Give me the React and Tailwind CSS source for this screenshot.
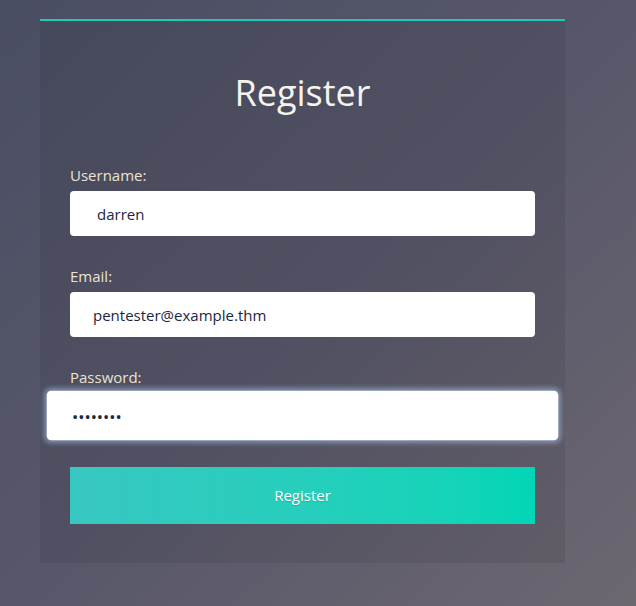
import React from 'react';

const Field = ({ label, type = 'text', value, pad = 'pl-[23px]', focused = false }) => (
    <div className="flex flex-col">
        <label className="text-[15px] leading-5 text-[#ece2d2] mb-[6px]">{label}</label>
        <input
            type={type}
            value={value}
            readOnly
            className={`h-[45px] w-full rounded-[4px] bg-white ${pad} pr-4 text-[15px] text-[#1b2640] outline-none ${
                focused ? 'scale-[1.1] shadow-[0_0_5px_2px_rgba(170,200,235,0.55)]' : ''
            }`}
            style={{ fontFamily: "'Open Sans', sans-serif" }}
        />
    </div>
);

export default function App() {
    return (
        <div
            className="min-h-[606px] w-full bg-gradient-to-br from-[#4a4e63] via-[#57576a] to-[#6d6770] pt-[19px] pb-[44px]"
            style={{ fontFamily: "'Open Sans', sans-serif" }}
        >
            <div className="ml-[40px] w-[525px] border-t-2 border-[#1ec9b9] bg-black/[0.07] px-[30px] pt-[50px] pb-[39px]">
                <h1 className="text-center text-[36px] leading-[43px] font-normal text-[#f6f3ee]">Register</h1>

                <form className="mt-[51px] flex flex-col gap-[30px]" onSubmit={(e) => e.preventDefault()}>
                    <Field label="Username:" value="darren" pad="pl-[27px]" />
                    <Field label="Email:" value="pentester@example.thm" />
                    <Field label="Password:" type="password" value="darren12" focused />
                </form>

                <button
                    type="button"
                    className="mt-[29px] block h-[57px] w-full bg-gradient-to-r from-[#37c7c1] to-[#00d6b6] text-[15px] text-white [text-shadow:0_1px_1px_rgba(0,0,0,0.15)]"
                >
                    Register
                </button>
            </div>
        </div>
    );
}
